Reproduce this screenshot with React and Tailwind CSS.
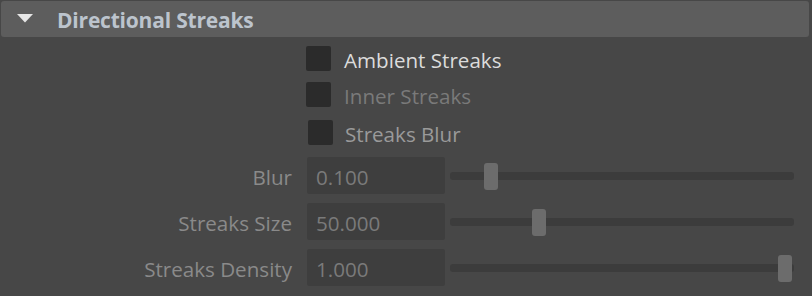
export default function App() {
  const checks = [
    { label: "Ambient Streaks", text: "text-[#dcdcdc]", box: "ml-[306px]", lbl: "ml-[13px]" },
    { label: "Inner Streaks", text: "text-[#7a7a7a]", box: "ml-[306px]", lbl: "ml-[13px]" },
    { label: "Streaks Blur", text: "text-[#9a9a9a]", box: "ml-[308px]", lbl: "ml-[12px]" },
  ];

  const rows = [
    { label: "Blur", value: "0.100", pos: 34 },
    { label: "Streaks Size", value: "50.000", pos: 82 },
    { label: "Streaks Density", value: "1.000", pos: 328 },
  ];

  return (
    <div
      className="w-[812px] h-[296px] bg-[#474747] overflow-hidden pt-px"
      style={{ fontFamily: '"Open Sans", "Noto Sans", sans-serif' }}
    >
      {/* Header */}
      <div className="mx-px w-[808px] h-[36px] rounded-[3px] bg-[#5d5d5d] flex items-center">
        <svg width="16" height="9" viewBox="0 0 16 9" className="ml-[16px] mt-[-1px]">
          <polygon points="0,0 16,0 8,8.5" fill="#e6e6e6" />
        </svg>
        <span className="ml-[24px] translate-y-[1px] text-[21px] font-bold text-[#bcc4cd] leading-none tracking-[-0.2px]">
          Directional Streaks
        </span>
      </div>

      {/* Checkboxes */}
      <div className="mt-[9px] flex flex-col">
        {checks.map((c, i) => (
          <div
            key={c.label}
            className={`flex items-center h-[25px] ${i === 0 ? "" : i === 1 ? "mt-[11px]" : "mt-[13px]"}`}
          >
            <div className={`${c.box} w-[25px] h-[25px] rounded-[2px] bg-[#2b2b2b]`} />
            <span className={`${c.lbl} translate-y-[2px] text-[20.6px] leading-none ${c.text}`}>
              {c.label}
            </span>
          </div>
        ))}
      </div>

      {/* Sliders */}
      <div className="mt-[12px] flex flex-col gap-[9px]">
        {rows.map((r) => (
          <div key={r.label} className="flex items-center h-[37px]">
            <div className="w-[292px] translate-y-[2px] text-right text-[20.6px] leading-none text-[#8a8a8a]">
              {r.label}
            </div>
            <div className="ml-[15px] w-[138px] h-[37px] rounded-[2px] bg-[#3e3e3e] flex items-center pl-[9px] pt-[3px] text-[20.6px] leading-none text-[#7a7a7a]">
              {r.value}
            </div>
            <div className="relative ml-[5px] w-[344px] h-[8px] rounded-[3px] bg-[#3c3c3c]">
              <div
                className="absolute top-[-9px] w-[14px] h-[27px] rounded-[3px] bg-[#6c6c6c]"
                style={{ left: r.pos }}
              />
            </div>
          </div>
        ))}
      </div>
    </div>
  );
}
